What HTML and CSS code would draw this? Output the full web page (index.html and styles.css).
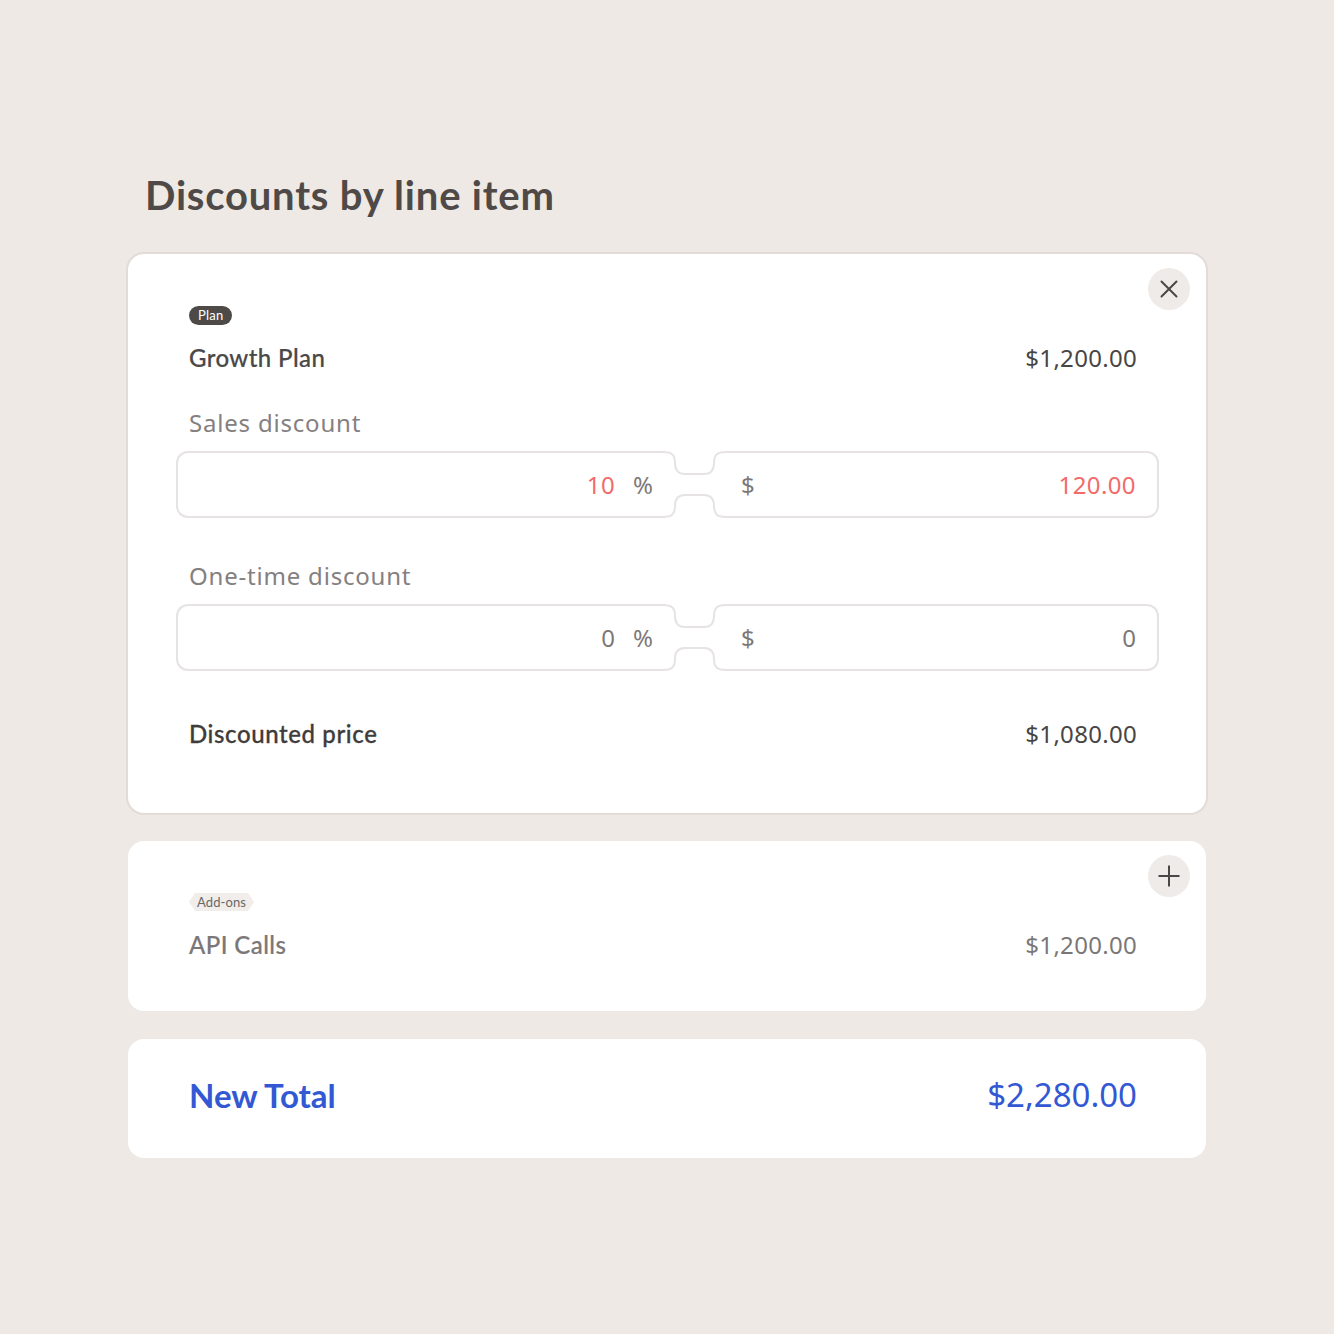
FILE: index.html
```html
<!DOCTYPE html>
<html lang="en">
<head>
<meta charset="utf-8">
<title>Discounts by line item</title>
<link rel="stylesheet" href="styles.css">
</head>
<body>
<main class="page">
  <h1 class="title">Discounts by line item</h1>

  <section class="card card-active">
    <button class="icon-btn" aria-label="Close">
      <svg width="20" height="20" viewBox="0 0 20 20"><path d="M2.5 2.5 L17.5 17.5 M17.5 2.5 L2.5 17.5" stroke="#4a4746" stroke-width="2" stroke-linecap="round" fill="none"/></svg>
    </button>
    <span class="badge badge-dark">Plan</span>
    <div class="row item-row">
      <span class="item-name">Growth Plan</span>
      <span class="amount">$1,200.00</span>
    </div>

    <div class="field-label">Sales discount</div>
    <div class="pair">
      <div class="box box-left"><span class="val red">10</span><span class="unit">%</span></div>
      <svg class="neck" width="63" height="67" viewBox="0 0 63 67"><path d="M0 1 C9 1 12 4 12 12 C12 19 15 23 22 23 L41 23 C48 23 51 19 51 12 C51 4 54 1 63 1 M0 66 C9 66 12 63 12 55 C12 48 15 44 22 44 L41 44 C48 44 51 48 51 55 C51 63 54 66 63 66" stroke="#e6e3e2" stroke-width="2" fill="none"/></svg>
      <div class="box box-right"><span class="unit">$</span><span class="val red">120.00</span></div>
    </div>

    <div class="field-label second">One-time discount</div>
    <div class="pair">
      <div class="box box-left"><span class="val">0</span><span class="unit">%</span></div>
      <svg class="neck" width="63" height="67" viewBox="0 0 63 67"><path d="M0 1 C9 1 12 4 12 12 C12 19 15 23 22 23 L41 23 C48 23 51 19 51 12 C51 4 54 1 63 1 M0 66 C9 66 12 63 12 55 C12 48 15 44 22 44 L41 44 C48 44 51 48 51 55 C51 63 54 66 63 66" stroke="#e6e3e2" stroke-width="2" fill="none"/></svg>
      <div class="box box-right"><span class="unit">$</span><span class="val">0</span></div>
    </div>

    <div class="row total-row">
      <span class="item-name strong">Discounted price</span>
      <span class="amount">$1,080.00</span>
    </div>
  </section>

  <section class="card card-addon">
    <button class="icon-btn" aria-label="Add">
      <svg width="24" height="24" viewBox="0 0 24 24"><path d="M12 1.5 V22.5 M1.5 12 H22.5" stroke="#4a4746" stroke-width="2" fill="none"/></svg>
    </button>
    <span class="badge badge-light">Add-ons</span>
    <div class="row item-row">
      <span class="item-name muted">API Calls</span>
      <span class="amount muted">$1,200.00</span>
    </div>
  </section>

  <section class="card card-total">
    <div class="row">
      <span class="new-total">New Total</span>
      <span class="new-amount">$2,280.00</span>
    </div>
  </section>
</main>
</body>
</html>
```

FILE: styles.css
```css
* { box-sizing: border-box; }
html, body { margin: 0; padding: 0; }
body {
  background: #eee9e5;
  font-family: "Noto Sans", "Open Sans", sans-serif;
  color: #4b4848;
}
.page {
  width: 1078px;
  margin-left: 128px;
  padding-top: 171px;
  display: flex;
  flex-direction: column;
}
.title {
  margin: 0 0 35px 17px;
  font-family: Lato, "Noto Sans", sans-serif;
  font-weight: 700;
  font-size: 40px;
  line-height: 48px;
  color: #4f4a47;
  letter-spacing: 0.8px;
}
.card {
  position: relative;
  background: #fff;
  border-radius: 16px;
  display: flex;
  flex-direction: column;
}
.card-active {
  box-shadow: 0 0 0 2px #e2dbd7;
  padding: 52px 47px 64px 48px;
}
.card-addon {
  margin-top: 28px;
  padding: 52px 69px 51px 61px;
}
.card-total {
  margin-top: 28px;
  padding: 36px 69px 43px 61px;
}
.icon-btn {
  position: absolute;
  right: 16px;
  top: 14px;
  width: 42px;
  height: 42px;
  border-radius: 50%;
  border: none;
  background: #efebe8;
  padding: 0;
  display: flex;
  align-items: center;
  justify-content: center;
}
.badge {
  align-self: flex-start;
  font-family: Lato, "Noto Sans", sans-serif;
  font-size: 13px;
  line-height: 19px;
  height: 19px;
}
.card-active .badge { margin-left: 13px; }
.badge-dark {
  background: #4d4a48;
  color: #fff;
  border-radius: 10px;
  padding: 0 9px;
  font-weight: 400;
  letter-spacing: 0.2px;
}
.badge-light {
  background: #f0edeb;
  color: #6b6767;
  padding: 0 8px;
  height: 18px;
  line-height: 18px;
  letter-spacing: 0.1px;
  clip-path: polygon(6px 0, calc(100% - 6px) 0, 100% 50%, calc(100% - 6px) 100%, 6px 100%, 0 50%);
}
.row {
  display: flex;
  justify-content: space-between;
  align-items: center;
}
.item-row { margin-top: 18px; }
.card-active .row { padding: 0 22px 0 13px; }
.card-addon .item-row { margin-top: 19px; }
.item-name {
  font-family: Lato, "Noto Sans", sans-serif;
  font-size: 24px;
  line-height: 30px;
  font-weight: 500;
  color: #4b4848;
  letter-spacing: 0.4px;
  -webkit-text-stroke: 0.2px currentColor;
}
.item-name.strong { color: #3f3c3b; letter-spacing: 0.6px; -webkit-text-stroke: 0.3px #3f3c3b; }
.item-name.muted { letter-spacing: 0.4px; }
.amount {
  font-size: 24px;
  line-height: 30px;
  color: #484545;
  letter-spacing: 0.3px;
}
.amount.muted { color: #7b7777; }
.muted { color: #7b7777; }
.field-label {
  margin: 35px 0 0 13px;
  font-size: 24px;
  line-height: 30px;
  color: #858080;
  letter-spacing: 0.8px;
}
.field-label.second { margin-top: 43px; }
.pair {
  display: flex;
  margin-top: 13px;
  height: 67px;
}
.box {
  display: flex;
  align-items: center;
  border: 2px solid #e6e3e2;
  font-size: 24px;
  color: #7d7878;
}
.box-left {
  flex: 1;
  border-right: none;
  border-radius: 12px 0 0 12px;
  justify-content: flex-end;
  padding-right: 10px;
  gap: 18px;
}
.box-right {
  width: 433px;
  border-left: none;
  border-radius: 0 12px 12px 0;
  justify-content: space-between;
  padding: 0 21px 0 15px;
}
.neck { flex: none; display: block; }
.val { color: #7d7878; }
.val.red { color: #f26b6b; letter-spacing: 0.4px; }
.unit { color: #7d7878; }
.total-row { margin-top: 48px; }
.new-total {
  font-family: Lato, "Noto Sans", sans-serif;
  font-weight: 700;
  font-size: 33px;
  line-height: 40px;
  color: #3358d4;
}
.new-amount {
  font-size: 33px;
  line-height: 40px;
  color: #3358d4;
}
```
